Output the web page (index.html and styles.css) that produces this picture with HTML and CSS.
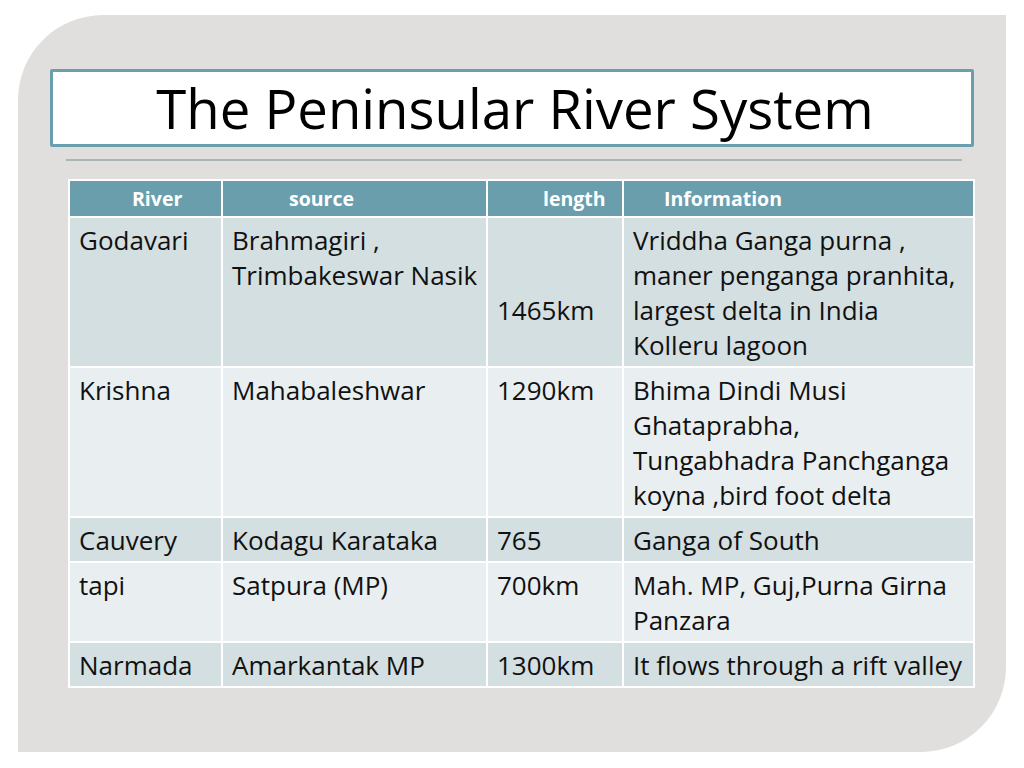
FILE: index.html
```html
<!DOCTYPE html>
<html>
<head>
<meta charset="utf-8">
<link rel="stylesheet" href="styles.css">
</head>
<body>
<div class="slide">
  <div class="title-box"><h1 class="title">The Peninsular River System</h1></div>
  <div class="rule"></div>
  <table class="rivers">
    <colgroup>
      <col class="c1"><col class="c2"><col class="c3"><col class="c4">
    </colgroup>
    <thead>
      <tr>
        <th class="h1">River</th>
        <th class="h2">source</th>
        <th class="h3">length</th>
        <th class="h4">Information</th>
      </tr>
    </thead>
    <tbody>
      <tr class="odd">
        <td>Godavari</td>
        <td>Brahmagiri ,<br>Trimbakeswar Nasik</td>
        <td><br><br>1465km</td>
        <td>Vriddha Ganga purna ,<br>maner penganga pranhita,<br>largest delta in India<br>Kolleru lagoon</td>
      </tr>
      <tr class="even">
        <td>Krishna</td>
        <td>Mahabaleshwar</td>
        <td>1290km</td>
        <td>Bhima Dindi Musi<br>Ghataprabha,<br>Tungabhadra Panchganga<br>koyna ,bird foot delta</td>
      </tr>
      <tr class="odd">
        <td>Cauvery</td>
        <td>Kodagu Karataka</td>
        <td>765</td>
        <td>Ganga of South</td>
      </tr>
      <tr class="even">
        <td>tapi</td>
        <td>Satpura (MP)</td>
        <td>700km</td>
        <td>Mah. MP, Guj,Purna Girna<br>Panzara</td>
      </tr>
      <tr class="odd">
        <td>Narmada</td>
        <td>Amarkantak MP</td>
        <td>1300km</td>
        <td>It flows through a rift valley</td>
      </tr>
    </tbody>
  </table>
</div>
</body>
</html>
```

FILE: styles.css
```css
html, body {
  margin: 0;
  padding: 0;
  background: #ffffff;
}
body {
  font-family: "Open Sans", "Noto Sans", sans-serif;
  width: 1024px;
  height: 768px;
  overflow: hidden;
}
.slide {
  margin: 15px 0 0 18px;
  width: 988px;
  height: 737px;
  background: #e0dfdd;
  border-radius: 85px 0 85px 0;
  padding: 54px 0 0 32px;
  box-sizing: border-box;
}
.title-box {
  width: 924px;
  height: 78px;
  box-sizing: border-box;
  border: 3px solid #6a9fad;
  border-radius: 2px;
  background: #ffffff;
  display: flex;
  align-items: center;
  justify-content: center;
}
.title {
  margin: 0;
  font-weight: 400;
  font-size: 54.5px;
  color: #000;
  line-height: 1;
  padding: 0 0 0 6px;
}
.rule {
  margin: 12px 0 0 16px;
  width: 896px;
  height: 2px;
  background: #a9b6b6;
}
.rivers {
  margin: 18px 0 0 18px;
  width: 905px;
  border-collapse: collapse;
  table-layout: fixed;
  font-size: 26px;
  color: #111;
}
.c1 { width: 153px; }
.c2 { width: 265px; }
.c3 { width: 136px; }
.c4 { width: 351px; }
.rivers th, .rivers td {
  border: 2px solid #ffffff;
}
.rivers th {
  background: #6a9ead;
  color: #ffffff;
  font-weight: 700;
  font-size: 19.5px;
  height: 35px;
  padding: 0;
  text-align: left;
  line-height: 35px;
}
.h1 { padding-left: 62px !important; }
.h2 { padding-left: 66px !important; }
.h3 { padding-left: 55px !important; }
.h4 { padding-left: 40px !important; }
.rivers td {
  vertical-align: top;
  padding: 5px 2px 3px 9px;
  line-height: 35px;
  white-space: nowrap;
}
.odd td { background: #d4dfe2; }
.even td { background: #e9eef0; }
```
